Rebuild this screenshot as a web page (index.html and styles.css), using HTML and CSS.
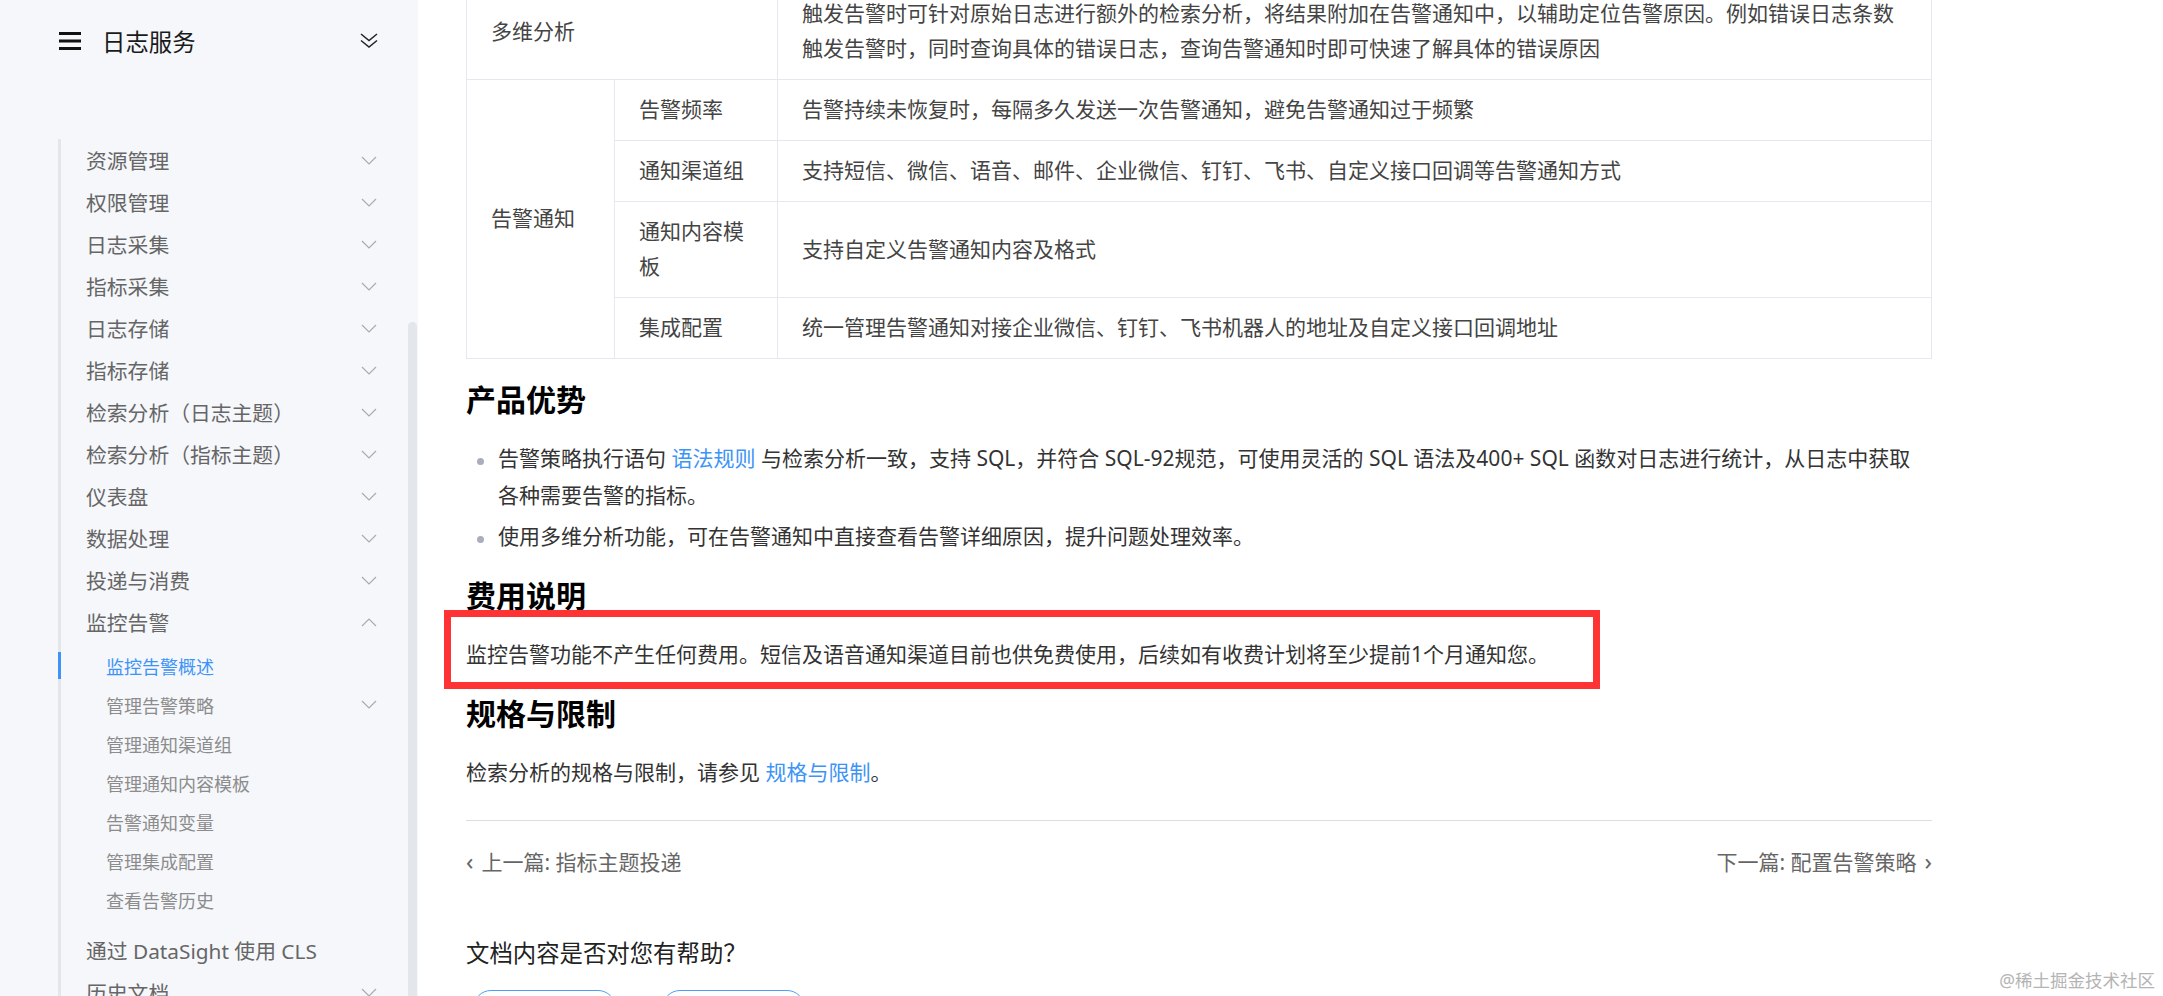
FILE: index.html
```html
<!DOCTYPE html>
<html lang="zh-CN">
<head>
    <meta charset="utf-8">
    <title>监控告警概述 - 日志服务</title>
    <link rel="stylesheet" href="styles.css">
</head>
<body>
    <svg class="defs" width="0" height="0">
        <symbol id="chev-down" viewBox="0 0 16 9"><polyline points="1,1 8,8 15,1" fill="none" stroke="currentColor" stroke-width="1.2"/></symbol>
        <symbol id="chev-up" viewBox="0 0 16 9"><polyline points="1,8 8,1 15,8" fill="none" stroke="currentColor" stroke-width="1.2"/></symbol>
    </svg>

    <aside class="sidebar">
        <div class="sb-head">
            <svg class="menu-icon" width="22" height="18" viewBox="0 0 22 18">
                <rect x="0" y="0" width="22" height="3" fill="#111"/>
                <rect x="0" y="7.5" width="22" height="3" fill="#111"/>
                <rect x="0" y="15" width="22" height="3" fill="#111"/>
            </svg>
            <span class="sb-title">日志服务</span>
            <svg class="collapse-icon" width="18" height="16" viewBox="0 0 18 16">
                <polyline points="1,1 9,7.5 17,1" fill="none" stroke="#222" stroke-width="1.5"/>
                <polyline points="1,7.5 9,14 17,7.5" fill="none" stroke="#222" stroke-width="1.5"/>
            </svg>
        </div>

        <ul class="nav">
            <li class="nav-item"><span>资源管理</span><svg class="arrow"><use href="#chev-down"/></svg></li>
            <li class="nav-item"><span>权限管理</span><svg class="arrow"><use href="#chev-down"/></svg></li>
            <li class="nav-item"><span>日志采集</span><svg class="arrow"><use href="#chev-down"/></svg></li>
            <li class="nav-item"><span>指标采集</span><svg class="arrow"><use href="#chev-down"/></svg></li>
            <li class="nav-item"><span>日志存储</span><svg class="arrow"><use href="#chev-down"/></svg></li>
            <li class="nav-item"><span>指标存储</span><svg class="arrow"><use href="#chev-down"/></svg></li>
            <li class="nav-item"><span>检索分析（日志主题）</span><svg class="arrow"><use href="#chev-down"/></svg></li>
            <li class="nav-item"><span>检索分析（指标主题）</span><svg class="arrow"><use href="#chev-down"/></svg></li>
            <li class="nav-item"><span>仪表盘</span><svg class="arrow"><use href="#chev-down"/></svg></li>
            <li class="nav-item"><span>数据处理</span><svg class="arrow"><use href="#chev-down"/></svg></li>
            <li class="nav-item"><span>投递与消费</span><svg class="arrow"><use href="#chev-down"/></svg></li>
            <li class="nav-item"><span>监控告警</span><svg class="arrow"><use href="#chev-up"/></svg></li>
            <li class="nav-sub">
                <ul>
                    <li class="sub-item active"><span>监控告警概述</span></li>
                    <li class="sub-item"><span>管理告警策略</span><svg class="arrow"><use href="#chev-down"/></svg></li>
                    <li class="sub-item"><span>管理通知渠道组</span></li>
                    <li class="sub-item"><span>管理通知内容模板</span></li>
                    <li class="sub-item"><span>告警通知变量</span></li>
                    <li class="sub-item"><span>管理集成配置</span></li>
                    <li class="sub-item"><span>查看告警历史</span></li>
                </ul>
            </li>
            <li class="nav-item"><span>通过 DataSight 使用 CLS</span></li>
            <li class="nav-item"><span>历史文档</span><svg class="arrow"><use href="#chev-down"/></svg></li>
        </ul>
        <div class="scrollbar"></div>
    </aside>

    <main class="content">
        <article class="doc">
            <table class="feature-table">
                <colgroup>
                    <col class="c1">
                    <col class="c2">
                    <col>
                </colgroup>
                <tr>
                    <td colspan="2">多维分析</td>
                    <td>触发告警时可针对原始日志进行额外的检索分析，将结果附加在告警通知中，以辅助定位告警原因。例如错误日志条数触发告警时，同时查询具体的错误日志，查询告警通知时即可快速了解具体的错误原因</td>
                </tr>
                <tr>
                    <td rowspan="4">告警通知</td>
                    <td>告警频率</td>
                    <td>告警持续未恢复时，每隔多久发送一次告警通知，避免告警通知过于频繁</td>
                </tr>
                <tr>
                    <td>通知渠道组</td>
                    <td>支持短信、微信、语音、邮件、企业微信、钉钉、飞书、自定义接口回调等告警通知方式</td>
                </tr>
                <tr>
                    <td>通知内容模板</td>
                    <td>支持自定义告警通知内容及格式</td>
                </tr>
                <tr>
                    <td>集成配置</td>
                    <td>统一管理告警通知对接企业微信、钉钉、飞书机器人的地址及自定义接口回调地址</td>
                </tr>
            </table>

            <h2>产品优势</h2>
            <ul class="bullets">
                <li>告警策略执行语句 <a href="#">语法规则</a> 与检索分析一致，支持 SQL，并符合 SQL-92规范，可使用灵活的 SQL 语法及400+ SQL 函数对日志进行统计，从日志中获取各种需要告警的指标。</li>
                <li>使用多维分析功能，可在告警通知中直接查看告警详细原因，提升问题处理效率。</li>
            </ul>

            <h2>费用说明</h2>
            <p class="note">监控告警功能不产生任何费用。短信及语音通知渠道目前也供免费使用，后续如有收费计划将至少提前1个月通知您。<span class="highlight"></span></p>

            <h2>规格与限制</h2>
            <p>检索分析的规格与限制，请参见 <a href="#">规格与限制</a>。</p>

            <hr class="divider">

            <div class="pager">
                <a href="#" class="prev"><span class="chev">‹</span>上一篇: 指标主题投递</a>
                <a href="#" class="next">下一篇: 配置告警策略<span class="chev">›</span></a>
            </div>

            <div class="feedback">
                <h3>文档内容是否对您有帮助？</h3>
                <div class="fb-buttons">
                    <button class="fb-btn">有帮助</button>
                    <button class="fb-btn">没帮助</button>
                </div>
            </div>
        </article>
    </main>

    <div class="watermark">@稀土掘金技术社区</div>
</body>
</html>
```

FILE: styles.css
```css
body {
    margin: 0;
    height: 996px;
    overflow: hidden;
    display: flex;
    background-color: #fff;
    font-family: "Noto Sans", "Noto Sans CJK SC", sans-serif;
    color: #333;
}
a {
    color: #3d94f6;
    text-decoration: none;
}
ul {
    list-style: none;
    margin: 0;
    padding: 0;
}
.defs {
    position: absolute;
}

/* sidebar */
.sidebar {
    width: 418px;
    flex-shrink: 0;
    background-color: #f5f7fb;
    position: relative;
}
.sb-head {
    height: 82px;
    display: flex;
    align-items: center;
    padding: 0 40px 0 59px;
}
.menu-icon {
    margin-right: 21px;
}
.sb-title {
    flex: 1;
    font-size: 23.4px;
    color: #1a1a1a;
}
.nav {
    margin: 57px 0 0 58px;
    border-left: 3px solid #e3e6eb;
}
.nav-item {
    height: 42px;
    display: flex;
    align-items: center;
    justify-content: space-between;
    padding: 0 41px 0 25px;
    font-size: 20.8px;
    color: #666;
}
.arrow {
    width: 16px;
    height: 9px;
    color: #a8abb2;
}
.nav-sub {
    padding: 3px 0 10px;
}
.sub-item {
    height: 39px;
    display: flex;
    align-items: center;
    justify-content: space-between;
    padding: 0 41px 0 45px;
    font-size: 18px;
    color: #8c8c8c;
    position: relative;
}
.sub-item.active {
    color: #3d94f6;
}
.sub-item.active::before {
    content: "";
    position: absolute;
    left: -3px;
    top: 6px;
    bottom: 6px;
    width: 3px;
    background-color: #3d94f6;
}
.scrollbar {
    position: absolute;
    left: 408px;
    top: 322px;
    bottom: 0;
    width: 9px;
    border-radius: 5px 5px 0 0;
    background-color: #e3e6eb;
}

/* content */
.content {
    flex: 1;
    padding: 0 231px 0 48px;
}
.doc {
    font-size: 21px;
    line-height: 37px;
}
.feature-table {
    width: 100%;
    margin-top: -17px;
    border-collapse: collapse;
    table-layout: fixed;
    color: #444;
}
.feature-table .c1 {
    width: 148px;
}
.feature-table .c2 {
    width: 163px;
}
.feature-table td {
    border: 1px solid #e5e8ef;
    padding: 12px 24px 13px;
    line-height: 35px;
    vertical-align: middle;
}
h2 {
    font-size: 30px;
    line-height: 42px;
    font-weight: bold;
    color: #000;
    margin: 20px 0 19px;
}
p {
    margin: 0;
}
.bullets {
    padding-right: 16px;
}
.bullets li {
    position: relative;
    padding-left: 32px;
}
.bullets li + li {
    margin-top: 4px;
}
.bullets li::before {
    content: "";
    position: absolute;
    left: 11px;
    top: 18px;
    width: 7px;
    height: 7px;
    border-radius: 50%;
    background-color: #a9adbc;
}
.note {
    position: relative;
}
.highlight {
    position: absolute;
    left: -22px;
    top: -26px;
    width: 1156px;
    height: 79px;
    border: 7px solid #ff3333;
    box-sizing: border-box;
    pointer-events: none;
}
.divider {
    border: none;
    border-top: 1px solid #ddd;
    margin: 29px 0 0;
}
.pager {
    display: flex;
    justify-content: space-between;
    margin-top: 21px;
}
.pager a {
    color: #666;
}
.pager .chev {
    font-size: 24px;
    margin: 0 8px 0 0;
}
.pager .next .chev {
    margin: 0 0 0 8px;
}
.feedback {
    margin-top: 54px;
}
.feedback h3 {
    margin: 0;
    font-size: 23.4px;
    line-height: 37px;
    font-weight: normal;
    color: #222;
}
.fb-buttons {
    display: flex;
    gap: 46px;
    margin: 18px 0 0 7px;
}
.fb-btn {
    width: 143px;
    height: 52px;
    border: 1.5px solid #4a9ff5;
    border-radius: 18px;
    background-color: #fff;
    font-family: inherit;
    font-size: 20px;
    color: #3d94f6;
}

.watermark {
    position: absolute;
    right: 8px;
    bottom: 6px;
    font-size: 17.5px;
    line-height: 20px;
    color: #b4b4b4;
}
```
